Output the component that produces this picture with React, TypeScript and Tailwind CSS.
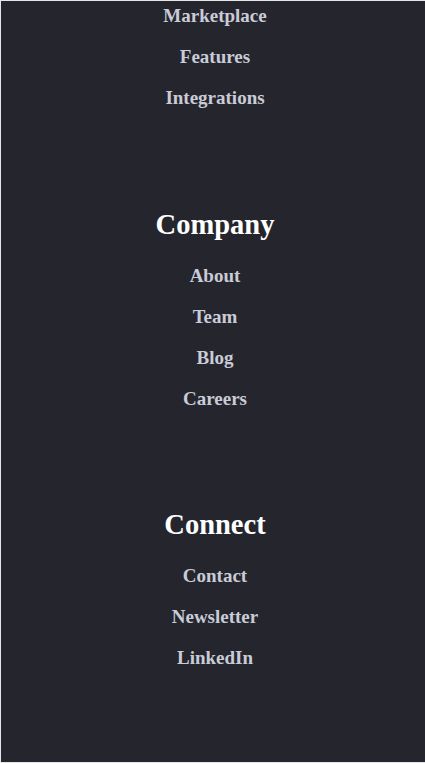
import React from "react";

const sections: { title?: string; links: string[] }[] = [
  { links: ["Marketplace", "Features", "Integrations"] },
  { title: "Company", links: ["About", "Team", "Blog", "Careers"] },
  { title: "Connect", links: ["Contact", "Newsletter", "LinkedIn"] },
];

export default function App() {
  return (
    <div className="w-[425px] h-[763px] overflow-hidden bg-[#e6e6e6] pt-px pl-px pb-px">
      <footer
        className="w-[428px] h-full bg-[#25252e] flex flex-col items-center gap-[97.5px] pt-[2px]"
        style={{ fontFamily: '"Liberation Serif", "Times New Roman", serif' }}
      >
        {sections.map((s, i) => (
          <div key={i} className="flex flex-col items-center">
            {s.title && (
              <h3 className="text-[28.5px] leading-[34px] font-bold text-white mb-[21px]">{s.title}</h3>
            )}
            <ul className="flex flex-col items-center gap-4 text-[19px] leading-[25px] font-bold">
              {s.links.map((l) => (
                <li key={l} className="text-[19px] leading-[25px]">
                  <a className="block text-[#c9ccd6]" href="#">
                    {l}
                  </a>
                </li>
              ))}
            </ul>
          </div>
        ))}
      </footer>
    </div>
  );
}
